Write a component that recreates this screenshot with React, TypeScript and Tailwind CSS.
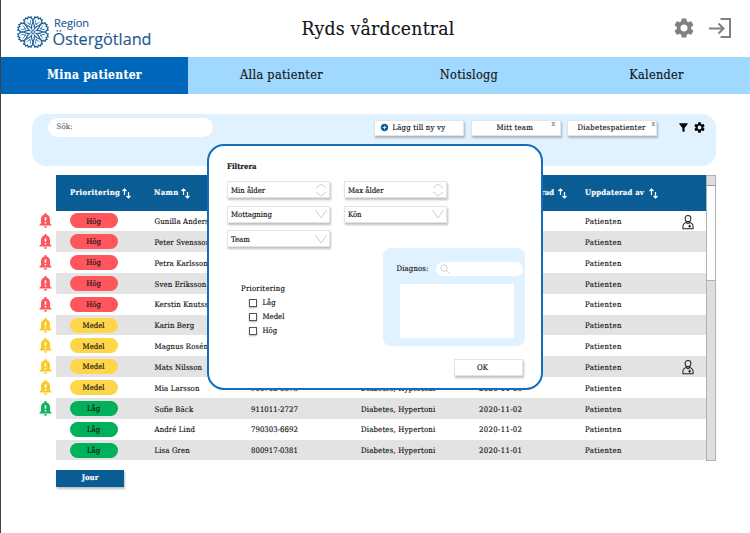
import React from "react";
import { MdSettings, MdFilterAlt, MdAddCircle } from "react-icons/md";

type Level = "Hög" | "Medel" | "Låg";
type Row = { level: Level; name: string; bell: boolean; nr?: string; diagnosis?: string; date?: string; person?: boolean };

const rows: Row[] = [
  { level: "Hög", name: "Gunilla Andersson", bell: true, person: true },
  { level: "Hög", name: "Peter Svensson", bell: true },
  { level: "Hög", name: "Petra Karlsson", bell: true },
  { level: "Hög", name: "Sven Eriksson", bell: true },
  { level: "Hög", name: "Kerstin Knutsson", bell: true },
  { level: "Medel", name: "Karin Berg", bell: true },
  { level: "Medel", name: "Magnus Rosén", bell: true },
  { level: "Medel", name: "Mats Nilsson", bell: true, person: true },
  { level: "Medel", name: "Mia Larsson", bell: true, nr: "900702-0373", diagnosis: "Diabetes, Hypertoni", date: "2020-11-03" },
  { level: "Låg", name: "Sofie Bäck", bell: true, nr: "911011-2727", diagnosis: "Diabetes, Hypertoni", date: "2020-11-02" },
  { level: "Låg", name: "André Lind", bell: false, nr: "790303-6692", diagnosis: "Diabetes, Hypertoni", date: "2020-11-02" },
  { level: "Låg", name: "Lisa Gren", bell: false, nr: "800917-0381", diagnosis: "Diabetes, Hypertoni", date: "2020-11-01" },
];

const pill: Record<Level, string> = { Hög: "bg-[#ff555d]", Medel: "bg-[#ffd54a]", Låg: "bg-[#00b159]" };
const bellColor: Record<Level, string> = { Hög: "text-[#ff555d]", Medel: "text-[#fbc926]", Låg: "text-[#0fb45c]" };

function Logo() {
  return (
    <svg viewBox="-17 -17 34 34" className="h-[34px] w-[34px] shrink-0" fill="none" stroke="#1d5f9c" strokeWidth="1.2" strokeLinejoin="round" strokeLinecap="round">
      {[0, 45, 90, 135, 180, 225, 270, 315].map((a) => (
        <g key={a} transform={`rotate(${a + 22.5})`}>
          <path d="M0-4 L-1.600-7 Q-4.400-8.500 -5-12 L-3.700-12.800 L-4.100-14.900 L-2.500-14.400 L-1.500-16 L0-14 L1.500-16 L2.500-14.400 L4.100-14.900 L3.700-12.800 L5-12 Q4.400-8.500 1.600-7 Z" />
          <path d="M0-8.200 Q-1.700-9.700 -2-11.500 M0-8.200 Q1.700-9.700 2-11.500" strokeWidth=".8" />
          <path d="M0-1.200 V-3.600" strokeWidth=".8" />
        </g>
      ))}
    </svg>
  );
}

function Bell() {
  return (
    <svg viewBox="0 0 13 15" className="h-[15px] w-[13px]" fill="currentColor">
      <path fillRule="evenodd" d="M6.5 0c.7 0 1.1.5 1.1 1.1v.4C9.8 2 11 3.900 11 6v4.300l1.600 1.500v.7H.4v-.7L2 10.300V6c0-2.100 1.200-4 3.400-4.500v-.4C5.400.5 5.800 0 6.500 0zM5.700 4.200v3.600h1.600V4.200zM5.700 9.100v1.500h1.600V9.100zM5 13.200h3c0 .9-.7 1.600-1.500 1.600S5 14.100 5 13.200z" />
    </svg>
  );
}

function Person() {
  return (
    <svg viewBox="0 0 13 16" className="mt-[1.500px] h-4 w-3" fill="none" stroke="#222" strokeWidth="1.1" strokeLinejoin="round">
      <path d="M6.500.9c1.900 0 3.100 1.300 3.100 3.200S8.200 7.600 6.500 7.600 3.400 6 3.400 4.100 4.600.9 6.500.9zM4.600 7.200v1.300L6.500 10l1.900-1.500V7.200M4.600 8.500C2 9.200 1 10.800 1 13v2.300h11V13c0-2.200-1-3.800-3.600-4.500" />
      <path d="M8.300 11.100v3M6.800 12.600h3" strokeWidth="1.200" />
    </svg>
  );
}

function Sort() {
  return (
    <svg viewBox="0 0 9 11" className="h-[11px] w-[9px]" fill="none" stroke="white" strokeWidth="1.200">
      <path d="M2.500 7V1M.5 3l2-2 2 2M6.500 4v6M4.500 8l2 2 2-2" />
    </svg>
  );
}

function Field({ label, stepper = false }: { label: string; stepper?: boolean }) {
  return (
    <div className="flex h-[17px] w-[103px] items-center justify-between border border-[#e4e4e4] bg-white pl-[3px] pr-[2px] shadow-[1px_2px_2px_rgba(0,0,0,0.25)]">
      <span className="pt-[2px]">{label}</span>
      <svg viewBox="0 0 12 14" className="h-[14px] w-3" fill="none" stroke="#cfcfcf" strokeWidth="1">
        {stepper ? <path d="M1 5l5-4 5 4M1 9l5 4 5-4" /> : <path d="M.5 3L6 11l5.500-8" />}
      </svg>
    </div>
  );
}

const card = "flex h-4 items-center border border-[#e4e4e4] bg-white shadow-[1px_2px_2px_rgba(0,0,0,0.25)]";

export default function App() {
  return (
    <div className="relative h-[533px] w-[750px] overflow-hidden whitespace-nowrap border-l border-[#444] bg-white font-['DejaVu_Serif_Condensed','DejaVu_Serif',serif] text-[7.700px] leading-none text-[#141414] [-webkit-text-stroke:0.150px] [font-stretch:condensed]">
      <header className="flex h-[57px] items-start">
        <div className="flex w-[300.500px] pl-[15px] pt-[15px] text-[#1d5a94]">
          <Logo />
          <div className="flex flex-col pl-[2.500px] pt-px font-['Open_Sans','Noto_Sans',sans-serif] [font-stretch:normal]">
            <span className="pl-[1.500px] text-[11px] leading-[14px]">Region</span>
            <span className="pt-px text-[16.200px] leading-[17px]">Östergötland</span>
          </div>
        </div>
        <h1 className="w-[370px] pt-[18px] text-[19.200px] leading-[21px] tracking-[0.250px]">Ryds vårdcentral</h1>
        <MdSettings className="mt-4 size-6 text-[#808080]" />
        <svg viewBox="0 0 24 22" className="ml-3 mt-[17px] h-[22px] w-6" fill="none" stroke="#808080" strokeWidth="2">
          <path d="M1 11.500h14M10.500 6.500l5 5-5 5M12.500 2H22v18H12.500" />
        </svg>
      </header>
      <nav className="flex h-[36.500px] bg-[#a0d8ff] text-[12.600px] tracking-[0.300px]">
        <div className="flex w-[187px] items-center justify-center bg-[#0066ba] text-[12px] font-bold text-white">Mina patienter</div>
        <div className="flex w-[187px] items-center justify-center">Alla patienter</div>
        <div className="flex w-[188px] items-center justify-center">Notislogg</div>
        <div className="flex w-[187px] items-center justify-center">Kalender</div>
      </nav>
      <section className="ml-[31px] mt-[20.500px] flex h-[51.500px] w-[684px] items-start rounded-[14px] bg-[#e0f1ff] pt-[3.500px] tracking-[0.200px]">
        <div className="ml-[15.500px] flex h-[19px] w-[165px] items-center rounded-full bg-white pl-[9px] text-[#666]">Sök:</div>
        <div className={`${card} ml-[161px] mt-[2px] w-[90px] gap-[4px] pl-[5px]`}>
          <MdAddCircle className="size-[9px] text-[#0a5c94]" />Lägg till ny vy
        </div>
        <div className={`${card} ml-[7px] mt-[2px] w-[90px] pl-[25px]`}>
          <span className="w-[55px]">Mitt team</span><span className="pb-[6px] text-[7px] text-[#777]">x</span>
        </div>
        <div className={`${card} ml-[6px] mt-[2px] w-[90px] pl-[10px]`}>
          <span className="w-[74px] tracking-[0.300px]">Diabetespatienter</span><span className="pb-[6px] text-[7px] text-[#777]">x</span>
        </div>
        <MdFilterAlt className="ml-[20px] mt-[3px] size-[13px] text-black" />
        <MdSettings className="ml-[3px] mt-[3px] size-[13px] text-black" />
      </section>
      <main className="mt-[9.500px] flex">
        <div className="w-[705px]">
          <div className="ml-[55px] flex h-[35.500px] items-center bg-[#0a5c94] pt-px font-bold text-white">
            <div className="flex w-[98px] items-center gap-[2px] pl-[14px] tracking-[0.350px]">Prioritering<Sort /></div>
            <div className="flex w-[325px] items-center gap-[2px] tracking-[0.350px]">Namn<Sort /></div>
            <div className="flex w-[106px] items-center justify-end gap-1 pr-[18px]">Uppdaterad<Sort /></div>
            <div className="flex items-center gap-[5px] tracking-[0.200px]">Uppdaterad av<Sort /></div>
          </div>
          {rows.map((r, i) => (
            <div key={r.name} className="flex h-[20.830px]">
              <div className={`flex w-[55px] items-center pl-[38px] ${bellColor[r.level]}`}>{r.bell && <Bell />}</div>
              <div className={`flex flex-1 items-center ${i % 2 ? "bg-[#e3e3e3]" : "bg-white"}`}>
                <div className="w-[98.500px] pl-[13.500px]">
                  <div className={`flex h-[15px] w-12 items-center justify-center rounded-full pt-px ${pill[r.level]}`}>{r.level}</div>
                </div>
                <span className="w-[96.500px] pt-[2px] tracking-[0.150px]">{r.name}</span>
                <span className="w-[110px] pt-[2px] tracking-[0.050px]">{r.nr}</span>
                <span className="w-[118px] pt-[2px] tracking-[0.200px]">{r.diagnosis}</span>
                <span className="w-[106px] pt-[2px] tracking-[0.350px]">{r.date}</span>
                <span className="w-[96.500px] pt-[2px] tracking-[0.400px]">Patienten</span>
                {r.person && <Person />}
              </div>
            </div>
          ))}
        </div>
        <div className="h-[285.500px] w-[10px] border border-[#b0b0b0] bg-[#dedede]">
          <div className="h-[10px] border-b border-[#999]" />
          <div className="h-[95px] border-b border-[#b0b0b0] bg-white" />
        </div>
      </main>
      <button className="ml-[55px] mt-[9px] flex h-[17px] w-[68px] items-center justify-center bg-[#0a5c94] font-bold text-white shadow-[1px_2px_2px_rgba(0,0,0,0.25)]">Jour</button>

      <div className="absolute left-[206px] top-[144px] h-[246px] w-[336px] rounded-[17px] border-2 border-[#126dbd] bg-white pl-[18px] pt-[16.500px]">
        <h2 className="font-bold">Filtrera</h2>
        <div className="mt-[11px] grid w-[220px] grid-cols-2 gap-x-[14px] gap-y-[7.500px]">
          <Field label="Min ålder" stepper />
          <Field label="Max ålder" stepper />
          <Field label="Mottagning" />
          <Field label="Kön" />
          <Field label="Team" />
        </div>
        <div className="flex">
          <div className="w-[156px] pl-[14px] pt-[38px]">
            <p className="tracking-[0.250px]">Prioritering</p>
            {["Låg", "Medel", "Hög"].map((t, i) => (
              <div key={t} className={`flex h-[14px] items-center gap-1.5 pl-[8px] ${i === 0 ? "mt-[3px]" : ""}`}>
                <span className="size-[7.500px] border border-[#555] bg-white shadow-[0_1px_2px_rgba(0,0,0,0.3)]" />{t}
              </div>
            ))}
          </div>
          <div className="mt-[0.500px] h-[98.500px] w-[142px] rounded-[8px] bg-[#e0f1ff] pt-[14px]">
            <div className="flex items-center pl-[13.500px]">
              <span className="w-[39px] pt-px tracking-[0.150px]">Diagnos:</span>
              <div className="flex h-[14px] w-[87px] items-center rounded-full bg-white pl-1">
                <svg viewBox="0 0 10 10" className="size-[10px]" fill="none" stroke="#d0d0d0"><circle cx="4" cy="4" r="3.200" /><path d="M6.500 6.500L9.500 9.500" /></svg>
              </div>
            </div>
            <div className="ml-[17px] mt-[8.500px] h-[53.500px] w-[114px] bg-white" />
          </div>
        </div>
        <button className="ml-[227px] mt-[13px] flex h-[17px] w-[69px] items-center border border-[#e4e4e4] bg-white pl-[22px] shadow-[1px_2px_2px_rgba(0,0,0,0.25)]">OK</button>
      </div>
    </div>
  );
}
